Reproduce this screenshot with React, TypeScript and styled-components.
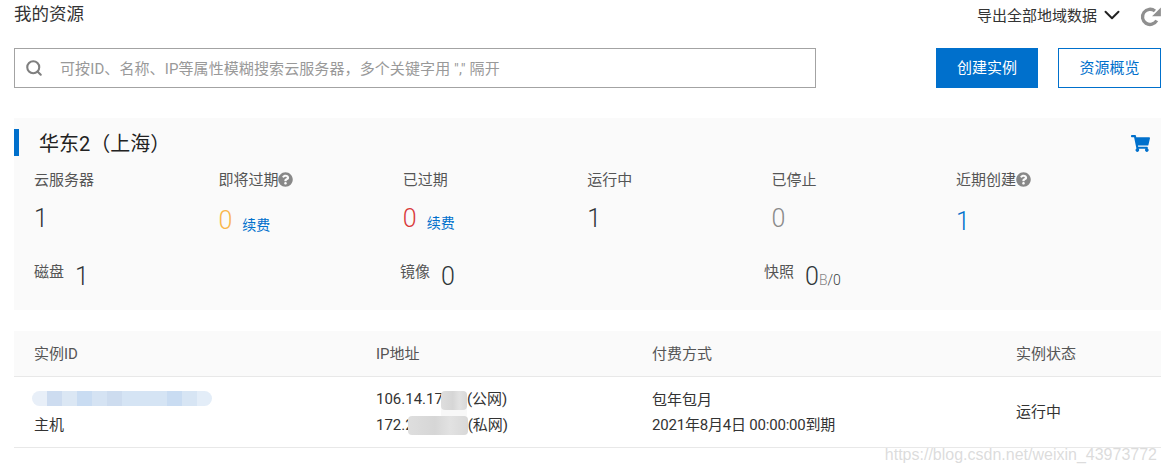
import { ReactElement } from "react";
import styled, { createGlobalStyle } from "styled-components";
import { ChevronDown, Search } from "lucide-react";
import { FaQuestionCircle, FaShoppingCart } from "react-icons/fa";

const FONT = `Roboto, "Noto Sans CJK SC", sans-serif`;

const stats = [
    { label: "云服务器", value: "1", tone: "#2f3538", drop: 0 },
    { label: "即将过期", value: "0", tone: "#f9b64a", drop: 2, help: true, renew: true },
    { label: "已过期", value: "0", tone: "#d93a3a", drop: 0, renew: true },
    { label: "运行中", value: "1", tone: "#2f3538", drop: 0 },
    { label: "已停止", value: "0", tone: "#8a8a8a", drop: 0 },
    { label: "近期创建", value: "1", tone: "#0070cc", drop: 3, help: true },
];

const blueShades = ["#e8eff8", "#cddcf0", "#dbe7f4", "#c9dcf2", "#d5e3f3", "#cddcef", "#d5e4f4", "#d5e4f4", "#d5e4f4", "#c9dcf2", "#d7e5f4", "#e3edf8"];

function RefreshGlyph(): ReactElement {
    return (
        <RefreshSvg viewBox="0 0 20 20" width={22} height={22}>
            <path d="M15.2 13.2A6.9 6.9 0 1 1 13.6 4.6" fill="none" stroke="#8f8f8f" strokeWidth="3" />
            <path d="M19 1.4V9.4H11Z" fill="#8f8f8f" />
        </RefreshSvg>
    );
}

export default function App(): ReactElement {
    return (
        <Page>
            <GlobalStyle />
            <TopBar>
                <Title>我的资源</Title>
                <TopActions>
                    <ExportLabel>导出全部地域数据</ExportLabel>
                    <ChevronDown size={26} color="#222" strokeWidth={1.8} />
                    <RefreshGlyph />
                </TopActions>
            </TopBar>

            <SearchRow>
                <SearchBox>
                    <Search size={18} color="#7f7f7f" strokeWidth={2.8} />
                    <SearchHint>可按ID、名称、IP等属性模糊搜索云服务器，多个关键字用 "," 隔开</SearchHint>
                </SearchBox>
                <PrimaryButton>创建实例</PrimaryButton>
                <OutlineButton>资源概览</OutlineButton>
            </SearchRow>

            <RegionPanel>
                <RegionHead>
                    <RegionTitle>华东2（上海）</RegionTitle>
                    <CartIcon size={19} color="#0070cc" />
                </RegionHead>
                <StatGrid>
                    {stats.map(stat => (
                        <Stat key={stat.label}>
                            <StatLabel>
                                {stat.label}
                                {stat.help && <HelpIcon size={15} color="#888" />}
                            </StatLabel>
                            <StatValueRow $drop={stat.drop}>
                                <StatValue $tone={stat.tone}>{stat.value}</StatValue>
                                {stat.renew && <RenewLink>续费</RenewLink>}
                            </StatValueRow>
                        </Stat>
                    ))}
                </StatGrid>
                <SummaryRow>
                    <Summary>
                        <SummaryLabel>磁盘</SummaryLabel>
                        <SummaryValue>1</SummaryValue>
                    </Summary>
                    <Summary>
                        <SummaryLabel>镜像</SummaryLabel>
                        <SummaryValue>0</SummaryValue>
                    </Summary>
                    <Summary>
                        <SummaryLabel>快照</SummaryLabel>
                        <SummaryValue>0<SummaryUnit>B</SummaryUnit><SummaryTotal>/0</SummaryTotal></SummaryValue>
                    </Summary>
                </SummaryRow>
            </RegionPanel>

            <Table>
                <HeadRow>
                    <span>实例ID</span>
                    <span>IP地址</span>
                    <span>付费方式</span>
                    <span>实例状态</span>
                </HeadRow>
                <BodyRow>
                    <Cell>
                        <BlueSmear>
                            {blueShades.map((shade, index) => (
                                <SmearBlock key={index} $shade={shade} />
                            ))}
                        </BlueSmear>
                        <span>主机</span>
                    </Cell>
                    <Cell>
                        <span>106.14.17<GreySmear $width={26} $offset={-2} $halo />(公网)</span>
                        <span>172.2<GreySmear $width={60} $offset={-6} />(私网)</span>
                    </Cell>
                    <Cell>
                        <span>包年包月</span>
                        <DateLine>2021年8月4日 00:00:00到期</DateLine>
                    </Cell>
                    <Cell>运行中</Cell>
                </BodyRow>
            </Table>
            <Watermark>https://blog.csdn.net/weixin_43973772</Watermark>
        </Page>
    );
}

const GlobalStyle = createGlobalStyle`
    html, body {
        margin: 0;
        background: #fff;
    }
`;

const Page = styled.div`
    position: relative;
    width: 1165px;
    height: 472px;
    overflow: hidden;
    box-sizing: border-box;
    padding: 0 4px 0 14px;
    font-family: ${FONT};
    color: #333;
`;

const TopBar = styled.div`
    display: flex;
    justify-content: space-between;
    align-items: center;
    height: 30px;
`;

const Title = styled.div`
    font-size: 17.5px;
    color: #333;
    margin-top: -5px;
`;

const TopActions = styled.div`
    display: flex;
    align-items: center;
    gap: 2px;
    margin-top: -1px;
`;

const ExportLabel = styled.span`
    font-size: 15px;
    color: #333;
`;

const RefreshSvg = styled.svg`
    margin-left: 13px;
    margin-right: -1px;
    margin-top: 5px;
`;

const SearchRow = styled.div`
    display: flex;
    align-items: stretch;
    margin-top: 18px;
    height: 40px;
`;

const SearchBox = styled.div`
    display: flex;
    align-items: center;
    gap: 17px;
    box-sizing: border-box;
    width: 802px;
    margin-right: 120px;
    padding-left: 10px;
    border: 1px solid #a3a3a3;
`;

const SearchHint = styled.span`
    font-size: 15px;
    letter-spacing: 0.1px;
    color: #999;
    margin-top: -1px;
`;

const PrimaryButton = styled.button`
    width: 102px;
    margin-right: 20px;
    padding: 0 0 4px;
    border: 1px solid #0070cc;
    background: #0070cc;
    color: #fff;
    font: 15px ${FONT};
`;

const OutlineButton = styled.button`
    width: 103px;
    padding: 0 0 4px;
    border: 1px solid #0070cc;
    background: #fff;
    color: #0070cc;
    font: 15px ${FONT};
`;

const RegionPanel = styled.section`
    margin-top: 30px;
    height: 192px;
    background: #fafafa;
`;

const RegionHead = styled.div`
    display: flex;
    justify-content: space-between;
    align-items: center;
    height: 27px;
    position: relative;
    top: 11px;
    padding: 0 11px 0 20px;
    border-left: 5px solid #0070cc;
`;

const RegionTitle = styled.div`
    font-size: 20px;
    color: #222;
`;

const CartIcon = styled(FaShoppingCart)`
    margin-top: 2px;
`;

const StatGrid = styled.div`
    display: grid;
    grid-template-columns: repeat(6, 184.4px);
    padding: 12px 0 0 20px;
    margin-top: 11px;
`;

const Stat = styled.div`
    display: flex;
    flex-direction: column;
`;

const StatLabel = styled.div`
    display: flex;
    align-items: center;
    height: 20px;
    font-size: 15px;
    color: #555;
`;

const HelpIcon = styled(FaQuestionCircle)`
    margin-top: 3px;
`;

const StatValueRow = styled.div<{ $drop: number }>`
    display: flex;
    align-items: baseline;
    gap: 10px;
    height: 30px;
    margin-top: ${props => 16 + props.$drop}px;
    margin-bottom: ${props => -props.$drop}px;
`;

const StatValue = styled.span<{ $tone: string }>`
    font-size: 25px;
    line-height: 30px;
    font-weight: 300;
    color: ${props => props.$tone};
`;

const RenewLink = styled.a`
    font-size: 14px;
    color: #0070cc;
    position: relative;
    top: 1px;
`;

const SummaryRow = styled.div`
    display: grid;
    grid-template-columns: 366px 364px 1fr;
    padding: 28px 0 0 20px;
`;

const Summary = styled.div`
    display: flex;
    align-items: baseline;
    gap: 11px;
`;

const SummaryLabel = styled.span`
    font-size: 15px;
    color: #555;
    position: relative;
    top: -8px;
`;

const SummaryValue = styled.span`
    font-size: 25px;
    font-weight: 300;
    color: #2f3538;
`;

const SummaryUnit = styled.small`
    font-size: 14px;
    color: #888;
`;

const SummaryTotal = styled.small`
    font-size: 14px;
    color: #373d41;
`;

const Table = styled.div`
    margin-top: 21px;
    font-size: 15px;
`;

const columns = `342px 276px 364px 1fr`;

const HeadRow = styled.div`
    display: grid;
    grid-template-columns: ${columns};
    align-items: center;
    height: 46px;
    padding: 0 0 2px 20px;
    box-sizing: border-box;
    background: #fafafa;
    border-bottom: 1px solid #e8e8e8;
    color: #555;
`;

const BodyRow = styled.div`
    display: grid;
    grid-template-columns: ${columns};
    align-items: center;
    height: 70px;
    padding-left: 20px;
    border-bottom: 1px solid #e8e8e8;
    color: #333;
`;

const Cell = styled.div`
    display: flex;
    flex-direction: column;
    gap: 5px;
    line-height: 20px;

    & > span {
        display: block;
        width: max-content;
    }
`;

const DateLine = styled.span`
    letter-spacing: -0.2px;
`;

const BlueSmear = styled.div`
    display: flex;
    height: 15px;
    width: 180px;
    margin: 2px 0 4px -2px;
`;

const SmearBlock = styled.div<{ $shade: string }>`
    flex: 1;
    background: ${props => props.$shade};

    &:first-child {
        border-radius: 8px 0 0 8px;
    }

    &:last-child {
        border-radius: 0 8px 8px 0;
    }
`;

const GreySmear = styled.i<{ $width: number; $offset: number; $halo?: boolean }>`
    display: inline-block;
    position: relative;
    vertical-align: middle;
    width: ${props => props.$width}px;
    height: 19px;
    margin-left: ${props => props.$offset}px;
    background: linear-gradient(90deg, #dedede, #d6d6d6 45%, #e2e2e2 70%, #d8d8d8);
    border-radius: 4px;
    box-shadow: ${props => (props.$halo ? "0 8px 0 #f8f8f8" : "none")};
`;

const Watermark = styled.div`
    position: absolute;
    right: 8px;
    bottom: 8px;
    font-family: "Liberation Sans", sans-serif;
    font-size: 16px;
    color: rgba(190, 190, 190, 0.55);
    pointer-events: none;
`;
